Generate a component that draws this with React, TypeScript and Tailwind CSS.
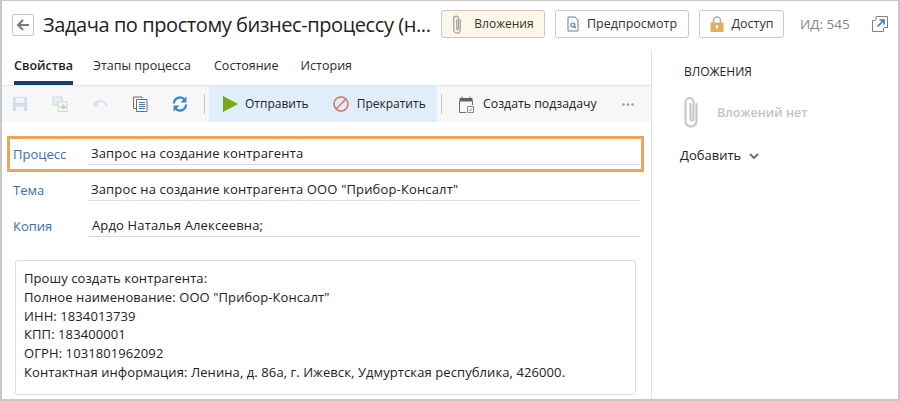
import type { ReactNode } from "react";

const font = { fontFamily: '"Open Sans", "Noto Sans", sans-serif' };

function ClipIcon({ className, color, sw = "1.6" }: { className?: string; color: string; sw?: string }) {
  return (
    <svg viewBox="0 0 16 32" className={className} fill="none" stroke={color} strokeWidth={sw} strokeLinecap="round">
      <path d="M13.500 8v17a5.500 5.500 0 0 1-11 0V6a4 4 0 0 1 8 0v17a1.500 1.500 0 0 1-3 0V8" />
    </svg>
  );
}

function HeaderButton({ children, active, width }: { children: ReactNode; active?: boolean; width: string }) {
  return (
    <button
      className={`h-7 ${width} flex items-center justify-center gap-2 rounded-[3px] border border-[#c8c8c8] text-[12.500px] text-[#333] ${
        active ? "bg-[#fdf7e8]" : "bg-white"
      }`}
    >
      {children}
    </button>
  );
}

function ToolIcon({ children, className = "" }: { children: ReactNode; className?: string }) {
  return (
    <svg viewBox="0 0 16 16" className={`w-4 h-4 shrink-0 ${className}`} fill="none">
      {children}
    </svg>
  );
}

function Field({ label, value, valueClass = "pl-[3px]" }: { label: string; value: string; valueClass?: string }) {
  return (
    <div className="flex items-end h-[25px]">
      <div className="w-[75px] text-[#3b6ea5] text-[13px] leading-[20px] pb-[1px]">{label}</div>
      <div className={`flex-1 border-b border-[#dcdcdc] text-[13px] tracking-[0.15px] leading-[20px] pb-[1px] text-[#222] ${valueClass}`}>{value}</div>
    </div>
  );
}

export default function App() {
  return (
    <div className="w-[900px] h-[401px] overflow-hidden bg-white border border-[#c8c8c8] border-b-2 border-l-2 border-r-2 flex flex-col" style={font}>
      {/* header */}
      <div className="h-[46px] shrink-0 flex items-center pl-[10px] pt-[2px]">
        <button className="w-[22px] h-[22px] shrink-0 rounded-[2px] border border-[#c4c4c4] flex items-center justify-center">
          <svg viewBox="0 0 14 14" className="w-[14px] h-[14px]" fill="none" stroke="#77797c" strokeWidth="2">
            <path d="M13 7H2M7 2 2 7l5 5" />
          </svg>
        </button>
        <h1 className="ml-[9px] w-[398px] shrink-0 text-[20px] leading-7 text-[#222] whitespace-nowrap tracking-[-0.42px]">
          Задача по простому бизнес-процессу (н...
        </h1>
        <div className="flex items-center gap-[10px] -mt-[2px]">
          <HeaderButton active width="w-[104px]">
            <ClipIcon className="w-[10px] h-[19px]" color="#a3a3a3" sw="2.200" />
            <span className="ml-1 text-[12px]">Вложения</span>
          </HeaderButton>
          <HeaderButton width="w-[134px]">
            <svg viewBox="0 0 12 16" className="w-3 h-4" fill="none">
              <path d="M1 1h7l3 3v11H1z" stroke="#6d7f93" />
              <circle cx="5.800" cy="9" r="2" stroke="#3b82c4" strokeWidth="1.200" />
              <path d="m7.300 10.500 1.500 1.500" stroke="#3b82c4" strokeWidth="1.200" />
            </svg>
            <span>Предпросмотр</span>
          </HeaderButton>
          <HeaderButton width="w-[85px]">
            <svg viewBox="0 0 14 16" className="w-[14px] h-4" fill="none">
              <path d="M3.500 7V4.500a3.500 3.500 0 0 1 7 0V7" stroke="#a9a9a9" strokeWidth="1.400" />
              <rect x="0.500" y="6.500" width="13" height="9.500" fill="#e3ae5b" />
              <circle cx="7" cy="10.500" r="1.300" fill="#fff" />
              <rect x="6.400" y="10.500" width="1.200" height="2.800" fill="#fff" />
            </svg>
            <span>Доступ</span>
          </HeaderButton>
          <span className="ml-[6px] text-[13.500px] text-[#7f8690] whitespace-nowrap">ИД: 545</span>
          <svg viewBox="0 0 16 16" className="ml-[12px] w-4 h-4" fill="none">
            <path d="M4 .5h11.500V12" stroke="#7c8288" />
            <path d="M4 .5V4M15.500 11.500H12M.5 4.500H3.500M.5 4.500V15.500H11.500V12" stroke="#7c8288" />
            <path d="m5.500 10.500 6-6M7.500 4h4.500v4.500" stroke="#2f7fc1" strokeWidth="1.600" />
          </svg>
        </div>
      </div>

      <div className="flex-1 flex min-h-0">
        {/* left column */}
        <div className="w-[649px] shrink-0 flex flex-col">
          <div className="h-[38px] shrink-0 flex items-start pl-3 text-[12.500px] text-[#2b2b2b] pt-[9px]">
            <div className="w-[59px] h-[29px] border-b-[4px] border-[#123f6d] text-center font-semibold leading-[20px] text-[#222]">Свойства</div>
            <div className="ml-5 leading-[20px]">Этапы процесса</div>
            <div className="ml-[23px] leading-[20px]">Состояние</div>
            <div className="ml-[22px] leading-[20px]">История</div>
          </div>

          {/* toolbar */}
          <div className="h-[37px] shrink-0 bg-[#f7f7f7] border-t border-[#e4e4e4] flex items-center text-[12px] text-[#222]">
            <div className="w-[207px] shrink-0 flex items-center h-full pl-[10px]">
              <ToolIcon>
                <path d="M1 1h14v14H1z" fill="#cfdeeb" />
                <path d="M3.500 2h9v5h-9z" fill="#f2f6fa" />
                <path d="M4 10.500h8V15H4z" fill="#f2f6fa" />
              </ToolIcon>
              <ToolIcon className="ml-6">
                <path d="M1 1h9v8H1z" stroke="#cbd8e4" fill="#e7eef5" />
                <path d="M6 6h9v9.500H6z" stroke="#d2d2d2" fill="#f9f9f9" />
                <path d="M7.500 11h5M10.500 8.500l2.500 2.500-2.500 2.500" stroke="#b7d79a" strokeWidth="1.500" />
              </ToolIcon>
              <ToolIcon className="ml-6">
                <path d="M1.500 4.500v6h6z" fill="#d5e1ec" />
                <path d="M3 8.500C6 3.500 12 3.500 15 9.500" stroke="#d5e1ec" strokeWidth="2" />
              </ToolIcon>
              <ToolIcon className="ml-6">
                <path d="M10 2.500V1H1.500v11.500H4" stroke="#6d6f72" />
                <path d="M4.500 3.500h10.500V15.500H4.500z" stroke="#6d6f72" fill="#fff" />
                <path d="M7 6.500h6M7 8.500h6M7 10.500h6M7 12.500h6" stroke="#3f7cb5" />
              </ToolIcon>
              <ToolIcon className="ml-6">
                <path d="M2 7.500A6 6 0 0 1 12.500 3.500" stroke="#3f86c6" strokeWidth="2.200" />
                <path d="M14.500 .5v6h-6z" fill="#3f86c6" />
                <path d="M14 8.500A6 6 0 0 1 3.500 12.500" stroke="#3f86c6" strokeWidth="2.200" />
                <path d="M1.500 15.500v-6h6z" fill="#3f86c6" />
              </ToolIcon>
              <div className="ml-[16px] w-px h-5 bg-[#c8c8c8]" />
            </div>
            <div className="w-[228px] shrink-0 h-full bg-[#e0eefb] flex items-center pl-[14px]">
              <svg viewBox="0 0 15 16" className="w-[15px] h-4">
                <path d="M0 0l15 8L0 16z" fill="#76aa14" />
              </svg>
              <span className="ml-[7px]">Отправить</span>
              <svg viewBox="0 0 16 16" className="ml-[24px] w-4 h-4" fill="none" stroke="#d9705a" strokeWidth="1.500">
                <circle cx="8" cy="8" r="7" />
                <path d="M3 13 13 3" />
              </svg>
              <span className="ml-[8px]">Прекратить</span>
            </div>
            <div className="ml-[4px] w-px h-5 bg-[#c8c8c8]" />
            <svg viewBox="0 0 15 17" className="ml-[17px] w-[15px] h-[17px]" fill="none">
              <path d="M.5 5v11.500h6.500M13.500 5v4" stroke="#6a6e72" />
              <path d="M.5 2h13v3.500H.5z" fill="#5e6266" />
              <path d="M3 .5v2M11 .5v2" stroke="#5e6266" />
              <path d="M8.500 10.500h6v6h-6z" stroke="#8a8a8a" fill="#fff" />
              <path d="m10 13.500 1.200 1.300 2-2.500" stroke="#d9534f" />
            </svg>
            <span className="ml-[9px] text-[12.300px]">Создать подзадачу</span>
            <svg viewBox="0 0 12 3" className="ml-[25px] w-3 h-[3px]" fill="#9a9a9a">
              <circle cx="1.500" cy="1.500" r="1.200" />
              <circle cx="6" cy="1.500" r="1.200" />
              <circle cx="10.500" cy="1.500" r="1.200" />
            </svg>
          </div>

          {/* fields */}
          <div className="ml-[5px] mr-[7px] mt-[14px] h-[36px] border-[3px] border-[#eca55f] pl-[3px] pr-[1px] pt-[1px]">
            <Field label="Процесс" value="Запрос на создание контрагента" />
          </div>
          <div className="pl-[11px] pr-[11px] mt-[4px] flex flex-col gap-[11px]">
            <Field label="Тема" value='Запрос на создание контрагента ООО "Прибор-Консалт"' />
            <Field label="Копия" value="Ардо Наталья Алексеевна;" valueClass="pl-[4px]" />
          </div>

          {/* message */}
          <div className="ml-[13px] mr-[15px] mt-[23px] h-[135px] shrink-0 rounded-[3px] border border-[#dcdcdc] px-2 pt-[8px] text-[13px] tracking-[0.09px] leading-[18.800px] text-[#222] whitespace-nowrap">
            <p>Прошу создать контрагента:</p>
            <p>Полное наименование: ООО "Прибор-Консалт"</p>
            <p>ИНН: 1834013739</p>
            <p>КПП: 183400001</p>
            <p>ОГРН: 1031801962092</p>
            <p>Контактная информация: Ленина, д. 86а, г. Ижевск, Удмуртская республика, 426000.</p>
          </div>
        </div>

        {/* right column */}
        <div className="flex-1 border-l border-[#e2e2e2] mt-[3px] pl-[28px] pt-[13px] text-[#222]">
          <div className="pl-[4px] text-[12px] leading-[18px]">ВЛОЖЕНИЯ</div>
          <div className="mt-[15px] flex items-center pl-[3px]">
            <ClipIcon className="w-4 h-8" color="#c9c9c9" sw="2.200" />
            <span className="ml-[18px] mt-[2px] text-[12.500px] text-[#c4c4c4] font-semibold">Вложений нет</span>
          </div>
          <div className="mt-[18px] flex items-center text-[13px] text-[#222]">
            <span>Добавить</span>
            <svg viewBox="0 0 10 6" className="ml-2 w-[10px] h-[6px]" fill="none" stroke="#6f7174" strokeWidth="2">
              <path d="m1 1 4 4 4-4" />
            </svg>
          </div>
        </div>
      </div>
    </div>
  );
}
